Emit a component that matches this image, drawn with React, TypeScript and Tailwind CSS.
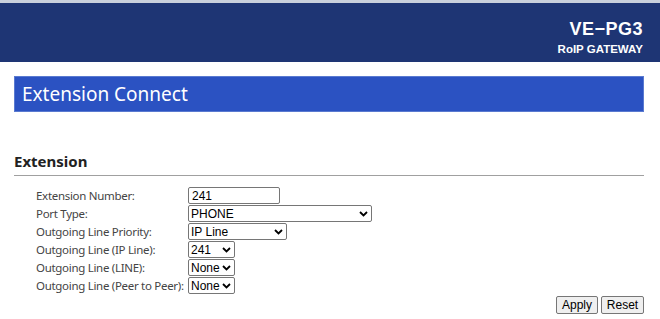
const rows = [
  { label: "Extension Number:", kind: "input", value: "241", w: "w-[92px]" },
  { label: "Port Type:", kind: "select", value: "PHONE", w: "w-[184px]" },
  { label: "Outgoing Line Priority:", kind: "select", value: "IP Line", w: "w-[99px]" },
  { label: "Outgoing Line (IP Line):", kind: "select", value: "241", w: "w-[47px]" },
  { label: "Outgoing Line (LINE):", kind: "select", value: "None", w: "w-[47px]" },
  { label: "Outgoing Line (Peer to Peer):", kind: "select", value: "None", w: "w-[47px]" },
];

const Chevron = () => (
  <svg width="9" height="6" viewBox="0 0 9 6" className="shrink-0">
    <path d="M1 1 L4.5 4.5 L8 1" fill="none" stroke="#000" strokeWidth="1.8" />
  </svg>
);

const App = () => {
  return (
    <div className="w-[660px] h-[319px] bg-white overflow-hidden font-['Noto_Sans',sans-serif]">
      {/* Header */}
      <div className="pt-[3px] bg-[#c9d0dc]">
        <div className="h-[59px] bg-[#1e3574] flex flex-col items-end pr-[17px] pt-[17px] text-white font-['Liberation_Sans',Arial,sans-serif]">
          <div className="text-[18px] font-bold leading-[18px] tracking-[0.5px]">VE−PG3</div>
          <div className="text-[11.5px] font-bold leading-[12px] mt-[5px]">RoIP GATEWAY</div>
        </div>
      </div>
      <div className="h-[1px] bg-white" />

      <div className="pl-[14px] pr-[16px]">
        {/* Title bar */}
        <div className="mt-[13px] h-[36px] bg-[#2b52c2] border border-[#5a7ad0] flex items-center pl-[7px] text-white text-[19px]">
          Extension Connect
        </div>

        {/* Section */}
        <div className="mt-[39px] text-[15px] font-bold text-[#222] leading-[20px]">Extension</div>
        <div className="mt-[4px] h-[1px] bg-[#a0a0a0]" />

        {/* Form */}
        <div className="mt-[11px] pl-[22px] flex flex-col gap-[1px] text-[11.5px] tracking-[-0.3px] text-[#444]">
          {rows.map((r) => (
            <div key={r.label} className="flex items-center h-[17px]">
              <div className="w-[152px] shrink-0 leading-[17px] whitespace-nowrap">{r.label}</div>
              {r.kind === "input" ? (
                <div
                  className={`${r.w} h-[17px] border border-[#767676] rounded-[2px] px-[3px] flex items-center text-[12px] tracking-normal text-black font-['Liberation_Sans',Arial,sans-serif]`}
                >
                  {r.value}
                </div>
              ) : (
                <div
                  className={`${r.w} h-[17px] border border-[#767676] rounded-[2px] pl-[2px] pr-[3px] flex items-center justify-between text-[12px] tracking-normal text-black font-['Liberation_Sans',Arial,sans-serif]`}
                >
                  <span>{r.value}</span>
                  <Chevron />
                </div>
              )}
            </div>
          ))}
        </div>

        {/* Buttons */}
        <div className="mt-[2px] flex justify-end gap-[3px] font-['Liberation_Sans',Arial,sans-serif] text-[12px] text-black">
          <button className="h-[18px] w-[42px] bg-[#efefef] border border-[#767676] rounded-[2px] leading-[16px]">
            Apply
          </button>
          <button className="h-[18px] w-[43px] bg-[#efefef] border border-[#767676] rounded-[2px] leading-[16px]">
            Reset
          </button>
        </div>
      </div>
    </div>
  );
};

export default App;
